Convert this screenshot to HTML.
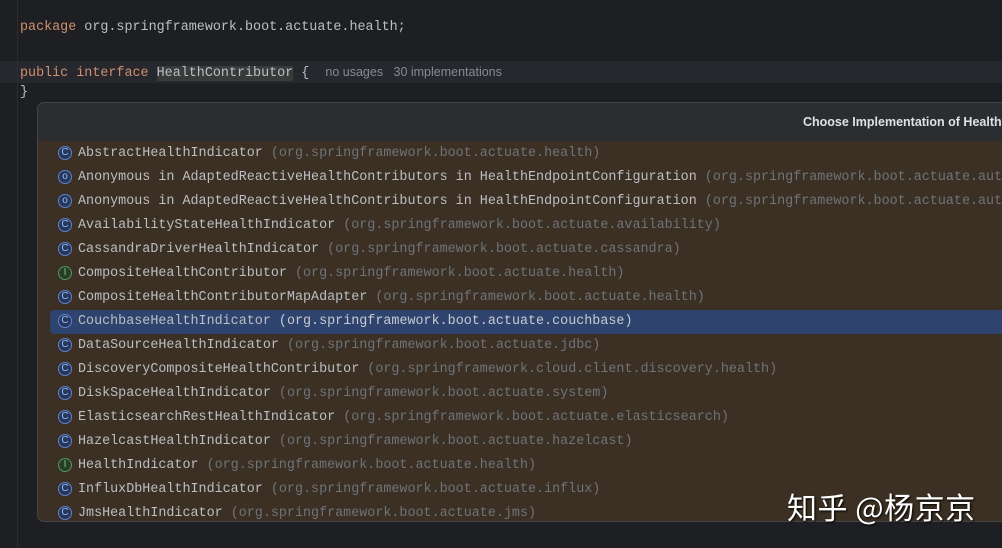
<!DOCTYPE html>
<html><head><meta charset="utf-8"><style>
html,body{margin:0;padding:0}
body{width:1002px;height:548px;background:#1e1f22;position:relative;overflow:hidden;font-family:"Liberation Mono",monospace;font-size:13.4px;color:#bcbec4}
.gut{position:absolute;left:17px;top:0;width:1px;height:548px;background:#2b2d30}
.ln{position:absolute;left:20px;white-space:pre;line-height:20px}
.kw{color:#cf8e6d}
.hl{position:absolute;left:0;top:61px;width:1002px;height:22px;background:#26282e}
.hint{font-family:"Liberation Sans",sans-serif;font-size:12.5px;color:#868a91}
.pop{position:absolute;left:37px;top:102px;width:980px;height:418px;border:1px solid #43454a;border-radius:7px;background:#3b3023;overflow:hidden}
.hdr{position:absolute;left:0;top:0;right:0;height:38px;background:#2b2d30}
.title{position:absolute;left:765px;top:12px;font-family:"Liberation Sans",sans-serif;font-weight:bold;font-size:12.5px;color:#dfe1e5;white-space:nowrap}
.row{position:absolute;left:12px;right:0;height:24px;line-height:24px;white-space:pre;padding-left:28px}
.row.sel{background:#2e436e;border-radius:4px 0 0 4px}
.g{color:#6f737a}
.sel .g{color:#c8cad0}
.ic{position:absolute;left:8px;top:4px;width:12px;height:12px;border-radius:50%;border:1.5px solid #5a84d8;background:#27375c;color:#9fbcf2;font-size:10px;line-height:12px;text-align:center;font-family:"Liberation Sans",sans-serif}
.ic.i{border-color:#4f9a56;background:#2a3d2b;color:#7fc482}
.wm{position:absolute;left:787px;top:484px;font-family:"Noto Sans CJK SC",sans-serif;font-size:30px;letter-spacing:0.5px;color:#fff;text-shadow:1px 1px 2px #000;white-space:nowrap}
</style></head><body>
<div class="hl"></div>
<div class="gut"></div>
<div class="ln" style="top:18px"><span class="kw">package</span> org.springframework.boot.actuate.health;</div>
<div class="ln" style="top:62px"><span class="kw">public interface</span> <span style="background:#373b39">HealthContributor</span> {  <span class="hint">no usages   30 implementations</span></div>
<div class="ln" style="top:83px">}</div>
<div class="pop">
<div class="hdr"><div class="title">Choose Implementation of HealthContributor</div></div>
<div class="row" style="top:39px"><span class="ic">C</span>AbstractHealthIndicator <span class="g">(org.springframework.boot.actuate.health)</span></div>
<div class="row" style="top:63px"><span class="ic">o</span>Anonymous in AdaptedReactiveHealthContributors in HealthEndpointConfiguration <span class="g">(org.springframework.boot.actuate.autoconfigure)</span></div>
<div class="row" style="top:87px"><span class="ic">o</span>Anonymous in AdaptedReactiveHealthContributors in HealthEndpointConfiguration <span class="g">(org.springframework.boot.actuate.autoconfigure)</span></div>
<div class="row" style="top:111px"><span class="ic">C</span>AvailabilityStateHealthIndicator <span class="g">(org.springframework.boot.actuate.availability)</span></div>
<div class="row" style="top:135px"><span class="ic">C</span>CassandraDriverHealthIndicator <span class="g">(org.springframework.boot.actuate.cassandra)</span></div>
<div class="row" style="top:159px"><span class="ic i">I</span>CompositeHealthContributor <span class="g">(org.springframework.boot.actuate.health)</span></div>
<div class="row" style="top:183px"><span class="ic">C</span>CompositeHealthContributorMapAdapter <span class="g">(org.springframework.boot.actuate.health)</span></div>
<div class="row sel" style="top:207px"><span class="ic">C</span>CouchbaseHealthIndicator <span class="g">(org.springframework.boot.actuate.couchbase)</span></div>
<div class="row" style="top:231px"><span class="ic">C</span>DataSourceHealthIndicator <span class="g">(org.springframework.boot.actuate.jdbc)</span></div>
<div class="row" style="top:255px"><span class="ic">C</span>DiscoveryCompositeHealthContributor <span class="g">(org.springframework.cloud.client.discovery.health)</span></div>
<div class="row" style="top:279px"><span class="ic">C</span>DiskSpaceHealthIndicator <span class="g">(org.springframework.boot.actuate.system)</span></div>
<div class="row" style="top:303px"><span class="ic">C</span>ElasticsearchRestHealthIndicator <span class="g">(org.springframework.boot.actuate.elasticsearch)</span></div>
<div class="row" style="top:327px"><span class="ic">C</span>HazelcastHealthIndicator <span class="g">(org.springframework.boot.actuate.hazelcast)</span></div>
<div class="row" style="top:351px"><span class="ic i">I</span>HealthIndicator <span class="g">(org.springframework.boot.actuate.health)</span></div>
<div class="row" style="top:375px"><span class="ic">C</span>InfluxDbHealthIndicator <span class="g">(org.springframework.boot.actuate.influx)</span></div>
<div class="row" style="top:399px"><span class="ic">C</span>JmsHealthIndicator <span class="g">(org.springframework.boot.actuate.jms)</span></div>
</div>
<div class="wm">知乎 @杨京京</div>
</body></html>
